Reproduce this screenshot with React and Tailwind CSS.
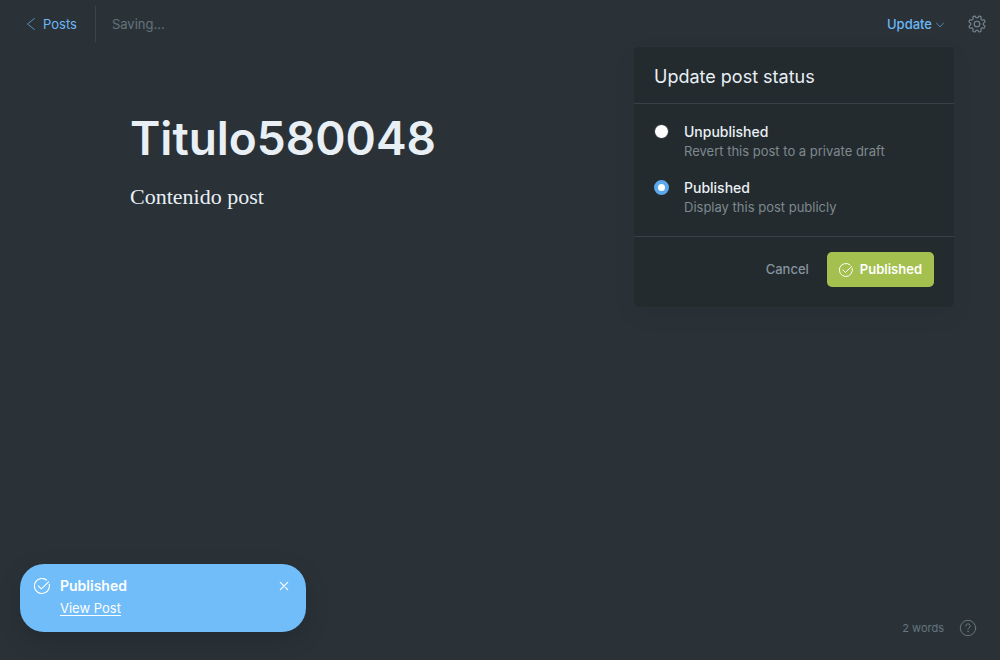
import React, { useState } from "react";

function CheckCircle({ className }) {
  return (
    <svg viewBox="0 0 16 16" fill="none" stroke="currentColor" strokeWidth="1.1" strokeLinecap="round" strokeLinejoin="round" className={className} aria-hidden="true">
      <path d="M15.2 6.2A7.5 7.5 0 1 1 12.6 2.1" />
      <path d="M4.3 7.8 7.3 10.8 14.6 3.8" />
    </svg>
  );
}

// Outline of an eight-toothed gear with softly rounded teeth, centred on (9, 9).
const gearOutline = Array.from({ length: 128 }, (_, i) => {
  const angle = (i / 128) * Math.PI * 2;
  const radius = 7.3 - 1.15 * Math.tanh(2 * Math.cos(angle * 8));
  return `${(9 + radius * Math.cos(angle)).toFixed(2)} ${(9 + radius * Math.sin(angle)).toFixed(2)}`;
}).join("L");

function Gear() {
  return (
    <svg viewBox="0 0 18 18" fill="none" stroke="currentColor" strokeWidth="1.1" strokeLinejoin="round" className="size-[18px]" aria-hidden="true">
      <circle cx="9" cy="9" r="2.8" />
      <path d={`M${gearOutline}Z`} />
    </svg>
  );
}

function StatusOption({ value, title, note, status, onChange }) {
  return (
    <label className="flex cursor-pointer items-start gap-[15px]">
      <input
        type="radio"
        name="status"
        value={value}
        checked={status === value}
        onChange={() => onChange(value)}
        className="mt-0.5 size-[15px] shrink-0 appearance-none rounded-full border border-[#242b2e] bg-white checked:border-4 checked:border-[#5ba8ec]"
      />
      <span className="flex flex-col">
        <span className="text-sm leading-5 font-medium text-[#e8eff5]">{title}</span>
        <span className="text-[13px] leading-[18px] text-[#7d898f]">{note}</span>
      </span>
    </label>
  );
}

function UpdateMenu() {
  const [status, setStatus] = useState("published");
  return (
    <form className="absolute top-full -right-2.5 z-10 w-80 rounded-[5px] bg-[#242b2e] shadow-[0_0_0_1px_rgba(42,50,54,1),0_8px_24px_rgba(0,0,0,0.06)]">
      <h2 className="border-b border-[#384246] px-5 pt-[17px] pb-[13px] text-lg leading-[26px] font-normal text-[#e8eff5]">Update post status</h2>
      <div className="flex flex-col gap-[18px] border-b border-[#384246] px-5 pt-[18px] pb-5">
        <StatusOption value="unpublished" title="Unpublished" note="Revert this post to a private draft" status={status} onChange={setStatus} />
        <StatusOption value="published" title="Published" note="Display this post publicly" status={status} onChange={setStatus} />
      </div>
      <div className="flex items-center justify-end gap-[18px] px-5 pt-[15px] pb-5 text-[13px]">
        <button type="button" className="font-medium text-[#8594a0]">Cancel</button>
        <button type="button" className="flex h-[35px] items-center gap-[7px] rounded-[5px] bg-[#a4c04f] px-3 font-semibold text-white">
          <CheckCircle className="size-3.5" />
          Published
        </button>
      </div>
    </form>
  );
}

export default function App() {
  return (
    <div className="flex min-h-screen flex-col bg-[#2a3238] font-['Inter','Liberation_Sans',sans-serif] text-[#e8eff5] antialiased">
      <header className="flex h-12 items-center justify-between pr-3.5 pl-[26px] text-[13px]">
        <div className="flex items-center">
          <a href="#posts" className="flex h-9 items-center gap-[7px] border-r border-[#39444b] pr-[18px] text-[#6bb8f5]">
            <svg viewBox="0 0 10 14" fill="none" stroke="currentColor" strokeLinecap="round" strokeLinejoin="round" className="h-3.5 w-2.5 opacity-70" aria-hidden="true">
              <path d="M8.5 1.5 1.5 7l7 5.500" />
            </svg>
            <span className="pt-px">Posts</span>
          </a>
          <span className="pt-px pl-4 text-[#64727a]">Saving...</span>
        </div>
        <div className="flex items-center gap-6">
          <div className="relative flex h-[46px] items-center">
            <button type="button" className="flex items-center gap-1 pt-px font-medium text-[#6bb8f5]">
              Update
              <svg viewBox="0 0 8 6" fill="none" stroke="currentColor" strokeLinecap="round" strokeLinejoin="round" className="h-1.5 w-2 opacity-60" aria-hidden="true">
                <path d="M.5 1 4 5l3.500-4" />
              </svg>
            </button>
            <UpdateMenu />
          </div>
          <button type="button" aria-label="Settings" className="text-[#7b8992]">
            <Gear />
          </button>
        </div>
      </header>

      <main className="flex-1 px-[13%] pt-[62px]">
        <h1 className="text-[46px] leading-[56px] font-semibold">Titulo580048</h1>
        <p className="mt-[15px] font-['Georgia','Liberation_Serif',serif] text-[22px] leading-8">Contenido post</p>
      </main>

      <footer className="flex items-end justify-between pr-6 pb-5 pl-5">
        <aside className="mb-2 flex w-[286px] items-start gap-2.5 rounded-3xl bg-[#70bdf9] px-3.5 pt-3 pb-3 text-white shadow-[0_8px_24px_rgba(0,0,0,0.16)]">
          <CheckCircle className="mt-0.5 size-4 shrink-0" />
          <div className="flex flex-1 flex-col items-start">
            <strong className="text-sm leading-5 font-semibold">Published</strong>
            <a href="#view" className="text-[13px] leading-6 underline underline-offset-2">View Post</a>
          </div>
          <button type="button" aria-label="Close" className="mt-[5px] mr-[3px] p-px">
            <svg viewBox="0 0 8 8" fill="none" stroke="currentColor" strokeWidth="1.2" strokeLinecap="round" className="size-2 overflow-visible" aria-hidden="true">
              <path d="m.3.3 7.400 7.400m0-7.400-7.400 7.400" />
            </svg>
          </button>
        </aside>
        <div className="flex items-center gap-4 pb-1 text-[11px] text-[#66757e]">
          <span>2 words</span>
          <button type="button" aria-label="Help">
            <svg viewBox="0 0 16 16" fill="none" stroke="currentColor" strokeLinecap="round" className="size-4 overflow-visible" aria-hidden="true">
              <circle cx="8" cy="8" r="7.700" />
              <path d="M5.800 6a2.200 2.200 0 1 1 3 2.050c-.6.25-.8.6-.8 1.450" />
              <circle cx="8" cy="11.700" r=".3" />
            </svg>
          </button>
        </div>
      </footer>
    </div>
  );
}
